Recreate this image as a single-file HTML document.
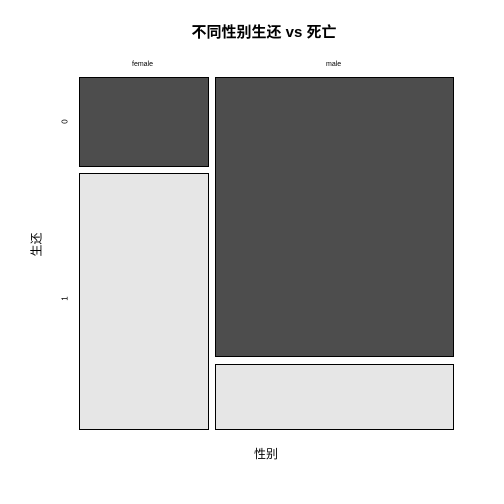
<!DOCTYPE html>
<html><head><style>
body{margin:0;width:504px;height:504px;background:#fff;position:relative;overflow:hidden;font-family:"Liberation Sans","Noto Sans CJK SC",sans-serif}
.r{position:absolute;border:1px solid #000;box-sizing:border-box}
.d{background:#4d4d4d}.l{background:#e6e6e6}
.t{position:absolute;white-space:nowrap}
</style></head><body>
<div class="t" style="left:0;width:528px;text-align:center;top:21px;font-size:15px;font-weight:bold">不同性别生还 vs 死亡</div>
<div class="t" style="left:132px;top:61px;font-size:7px">female</div>
<div class="t" style="left:326px;top:61px;font-size:7px">male</div>
<div class="r d" style="left:79px;top:77px;width:130px;height:90px"></div>
<div class="r l" style="left:79px;top:173px;width:130px;height:257px"></div>
<div class="r d" style="left:215px;top:77px;width:239px;height:280px"></div>
<div class="r l" style="left:215px;top:364px;width:239px;height:66px"></div>
<div class="t" style="left:63px;top:117px;font-size:8px;transform:rotate(-90deg)">0</div>
<div class="t" style="left:63px;top:294px;font-size:8px;transform:rotate(-90deg)">1</div>
<div class="t" style="left:24px;top:236px;font-size:12px;transform:rotate(-90deg)">生还</div>
<div class="t" style="left:254px;top:445px;font-size:12px">性别</div>
</body></html>
